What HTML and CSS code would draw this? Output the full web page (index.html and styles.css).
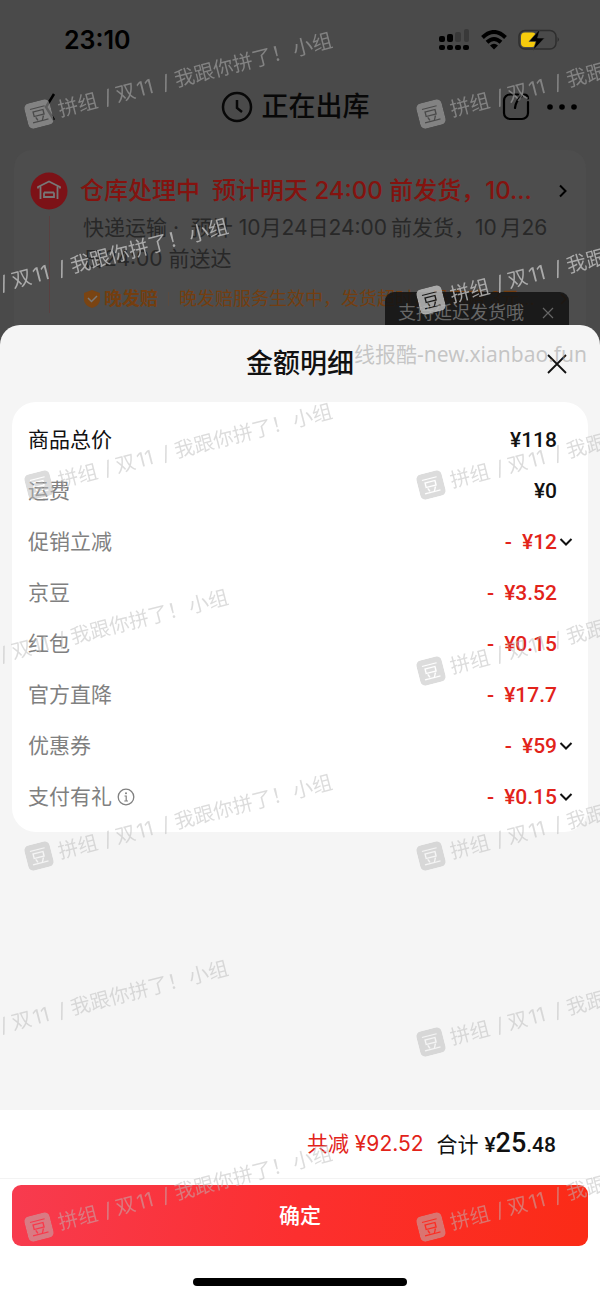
FILE: index.html
```html
<!DOCTYPE html>
<html lang="zh-CN">
<head>
<meta charset="utf-8">
<meta name="viewport" content="width=device-width, initial-scale=1">
<title>金额明细</title>
<link rel="stylesheet" href="styles.css">
</head>
<body>
<div class="screen">
  <div class="order">
    <div class="status-bar">
      <span class="clock">23:10</span>
      <div class="status-icons">
        <svg width="31" height="22" viewBox="0 0 31 22">
          <g fill="#000"><rect x="0" y="7" width="6" height="6" rx="2"/><rect x="8" y="5" width="6" height="8" rx="2"/><rect x="0" y="16" width="6" height="5" rx="2"/><rect x="8" y="16" width="6" height="5" rx="2"/><rect x="16" y="16" width="6" height="5" rx="2"/><rect x="24" y="16" width="6" height="5" rx="2"/></g>
          <g fill="#393939"><rect x="16" y="3" width="6" height="10" rx="2"/><rect x="25" y="0" width="5" height="13" rx="2"/></g>
        </svg>
        <svg width="26" height="20" viewBox="0 0 26 20">
          <g fill="none" stroke="#000" stroke-width="4"><path d="M1.5 7.5Q13-3.5 24.5 7.5"/><path d="M6 12.2Q13 5.800 20 12.200"/></g>
          <path d="M9 15.500Q13 12 17 15.500L13 19.500Z"/>
        </svg>
        <svg width="42" height="22" viewBox="0 0 42 22">
          <rect x="1" y="1.500" width="37" height="18.500" rx="6" fill="none" stroke="#2e2e2e" stroke-width="1.500"/>
          <path d="M39.500 8q3 2.500 0 5z" fill="#2e2e2e"/>
          <rect x="3" y="3.500" width="15" height="14.500" rx="4" fill="#f6cb0c"/>
          <path d="M22 0L11 12.500h7L15 21.500 26.500 9h-7z" stroke="#4a4a4a" stroke-width=".6"/>
        </svg>
      </div>
    </div>
    <div class="nav">
      <button class="icon-button back" aria-label="返回"><svg width="12" height="32" viewBox="0 0 12 32"><path d="M10 3L2 16L10 29" fill="none" stroke="#000" stroke-width="2.500"/></svg></button>
      <h1 class="nav-title">
        <svg width="32" height="32" viewBox="0 0 32 32"><g fill="none" stroke="#080808" stroke-width="2.500"><circle cx="16" cy="16" r="14"/><path d="M16 9v8l5 4"/></g></svg>
        正在出库
      </h1>
      <div class="nav-actions">
        <button class="icon-button" aria-label="分享"><svg width="28" height="28" viewBox="0 0 28 28"><g fill="none" stroke="#000" stroke-width="2.200" stroke-linecap="round"><path d="M16 1.500H8a6 6 0 0 0-6 6V20a6 6 0 0 0 6 6h12a6 6 0 0 0 6-6V9M22 1.500q4 0 4 4M20 3q-6 4-7 12"/></g></svg></button>
        <button class="icon-button" aria-label="更多"><svg width="32" height="8" viewBox="0 0 32 8"><circle cx="4" cy="4" r="2.800"/><circle cx="16" cy="4" r="2.800"/><circle cx="28" cy="4" r="2.800"/></svg></button>
      </div>
    </div>
    <section class="order-card">
      <div class="track">
        <svg width="38" height="38" viewBox="0 0 38 38"><circle cx="19" cy="19" r="18.500" fill="#7c1217"/><g fill="none" stroke="#777" stroke-width="1.800"><path d="M8 16.500V15L19 9.500 30 15v1.500M10.500 14v13M27.500 14v13M14 20.500h10M14 26V20.500M24 26V20.500M14 25h10"/></g></svg>
        <span class="track-line"></span>
      </div>
      <div class="order-body">
        <div class="order-head">
          <h2 class="order-status">仓库处理中&ensp;预计明天 24:00 前发货，10...</h2>
          <svg width="10" height="16" viewBox="0 0 10 16"><path d="M2 2.500L7.500 8 2 13.500" fill="none" stroke="#000" stroke-width="2"/></svg>
        </div>
        <p class="order-text">快递运输&nbsp;·&nbsp; 预计 10月24日24:00&thinsp;前发货，10&thinsp;月26<br>日24:00 前送达</p>
        <p class="promise">
          <svg width="18" height="20" viewBox="0 0 18 20"><path d="M9 1l8 3v7q0 5-8 8-8-3-8-8V4z" fill="#7a4412"/><path d="M5 9l3.500 3.500L14 7" fill="none" stroke="#777" stroke-width="1.500"/></svg>
          <b>晚发赔</b><i></i><span class="promise-text">晚发赔服务生效中，发货超时，最高赔 3元…</span><svg width="8" height="14" viewBox="0 0 8 14"><path d="M1 2l5 5-5 5" fill="none" stroke="#65360f" stroke-width="1.500"/></svg>
        </p>
      </div>
      <div class="toast">支持延迟发货哦
        <button class="icon-button" aria-label="关闭提示"><svg width="12" height="12" viewBox="0 0 12 12"><path d="M1 1l10 10M11 1L1 11" stroke="#666" stroke-width="1.200"/></svg></button>
      </div>
    </section>
  </div>

  <main class="sheet">
    <header class="sheet-head">
      <h2 class="sheet-title">金额明细</h2>
      <button class="icon-button sheet-close" aria-label="关闭"><svg width="20" height="20" viewBox="0 0 20 20"><path d="M1 1l18 18M19 1L1 19" stroke="#111" stroke-width="1.800"/></svg></button>
      <span class="site-mark">线报酷-new.xianbao.fun</span>
    </header>
    <dl class="bill">
      <div class="bill-row strong"><dt>商品总价</dt><dd>¥118</dd></div>
      <div class="bill-row"><dt>运费</dt><dd>¥0</dd></div>
      <div class="bill-row off"><dt>促销立减</dt><dd><span class="minus">-</span>¥12</dd><button class="icon-button more" aria-label="展开促销立减"><svg width="14" height="10" viewBox="0 0 14 10"><path d="M1.500 2L7 7.500 12.500 2" fill="none" stroke="#111" stroke-width="2"/></svg></button></div>
      <div class="bill-row off"><dt>京豆</dt><dd><span class="minus">-</span>¥3.52</dd></div>
      <div class="bill-row off"><dt>红包</dt><dd><span class="minus">-</span>¥0.15</dd></div>
      <div class="bill-row off"><dt>官方直降</dt><dd><span class="minus">-</span>¥17.7</dd></div>
      <div class="bill-row off"><dt>优惠券</dt><dd><span class="minus">-</span>¥59</dd><button class="icon-button more" aria-label="展开优惠券"><svg width="14" height="10" viewBox="0 0 14 10"><path d="M1.500 2L7 7.500 12.500 2" fill="none" stroke="#111" stroke-width="2"/></svg></button></div>
      <div class="bill-row off"><dt>支付有礼<svg width="18" height="18" viewBox="0 0 18 18"><circle cx="9" cy="9" r="7.800" fill="none" stroke="#808080" stroke-width="1.300"/><path d="M7.500 8H9.200v5M7.300 13h3.700" fill="none" stroke="#808080" stroke-width="1.200"/><circle cx="9" cy="5.300" r="1" fill="#808080"/></svg></dt><dd><span class="minus">-</span>¥0.15</dd><button class="icon-button more" aria-label="展开支付有礼"><svg width="14" height="10" viewBox="0 0 14 10"><path d="M1.500 2L7 7.500 12.500 2" fill="none" stroke="#111" stroke-width="2"/></svg></button></div>
    </dl>
  </main>

  <footer class="footer">
    <div class="total">
      <span class="saved">共减 <span>¥92.52</span></span>
      <span class="sum">合计 <b>¥<span class="sum-big">25</span>.48</b></span>
    </div>
    <div class="confirm-bar"><button class="confirm">确定</button></div>
    <div class="home-bar"></div>
  </footer>

  <svg class="marks" aria-hidden="true">
    <defs>
      <mask id="bean"><rect x="-13" y="-13" width="26" height="26" rx="5" fill="#fff"/><text class="bean" x="0" y="7" text-anchor="middle">豆</text></mask>
      <g id="mark" class="mark">
        <rect x="-13" y="-13" width="26" height="26" rx="5" mask="url(#bean)"/>
        <text x="20" y="8">拼组</text><text x="67" y="8">/</text><text x="79" y="8">双</text><text x="101" y="8">11</text><text x="127" y="8">/</text><text x="140" y="8">我跟你拼了！</text><text x="262" y="8">小组</text>
      </g>
    </defs>
    <use href="#mark" transform="translate(39 114) rotate(-14.400)"/>
    <use href="#mark" transform="translate(431 114) rotate(-14.400)"/>
    <use class="bright" href="#mark" transform="translate(-65 300) rotate(-14.400)"/>
    <use class="bright" href="#mark" transform="translate(431 300) rotate(-14.400)"/>
    <use href="#mark" transform="translate(39 485) rotate(-14.400)"/>
    <use href="#mark" transform="translate(431 485) rotate(-14.400)"/>
    <use href="#mark" transform="translate(-65 671) rotate(-14.400)"/>
    <use href="#mark" transform="translate(431 671) rotate(-14.400)"/>
    <use href="#mark" transform="translate(39 856) rotate(-14.400)"/>
    <use href="#mark" transform="translate(431 856) rotate(-14.400)"/>
    <use href="#mark" transform="translate(-65 1042) rotate(-14.400)"/>
    <use href="#mark" transform="translate(431 1042) rotate(-14.400)"/>
    <use href="#mark" transform="translate(39 1227) rotate(-14.400)"/>
    <use href="#mark" transform="translate(431 1227) rotate(-14.400)"/>
  </svg>
</div>
</body>
</html>
```
FILE: styles.css
```css
* { box-sizing: border-box; }
body { margin: 0; font-family: Inter, "Noto Sans CJK SC", sans-serif; color: #111; }
h1, h2, p, dl, dd { margin: 0; }
svg { display: block; flex: none; }
.icon-button { display: flex; align-items: center; justify-content: center; padding: 0; border: 0; background: none; flex: none; }

.screen { position: relative; display: flex; flex-direction: column; min-height: 100vh; overflow: hidden; background: #4a4a4a; }

/* dimmed order page behind the sheet */
.order { display: flex; flex-direction: column; }
.status-bar { display: flex; align-items: center; justify-content: space-between; height: 80px; padding: 0 40px 0 64px; }
.clock { font-size: 25px; font-weight: 600; color: #000; }
.status-icons { display: flex; align-items: center; gap: 11px; }
.nav { display: grid; grid-template-columns: 1fr auto 1fr; align-items: center; height: 54px; padding: 0 22px 0 12px; }
.nav-title { display: flex; align-items: center; gap: 9px; font-size: 27px; line-height: 36px; font-weight: 500; color: #080808; }
.back { justify-self: start; margin-left: 32px; }
.nav-actions { display: flex; align-items: center; gap: 16px; justify-self: end; }
.order-card { position: relative; display: flex; gap: 12px; margin: 16px 14px 0; padding: 22px 18px 30px 16px; border-radius: 18px; background: #4d4d4d; }
.track { display: flex; flex-direction: column; align-items: center; gap: 6px; }
.track-line { flex: 1; width: 1px; background: #633; opacity: .5; }
.order-body { flex: 1; min-width: 0; }
.order-head { display: flex; align-items: center; justify-content: space-between; height: 38px; }
.order-status { font-size: 24px; line-height: 36px; font-weight: 500; color: #84130f; white-space: nowrap; }
.order-text { padding: 2px 0 0 3px; font-size: 21px; line-height: 31px; color: #282828; }
.promise { display: flex; align-items: center; gap: 3px; padding: 11px 0 0 3px; font-size: 18px; line-height: 28px; color: #743e10; }
.promise b { font-weight: 600; }
.promise i { width: 1px; height: 14px; margin: 0 7px; background: #5a4b40; }
.promise-text { flex: 1; white-space: nowrap; }
.toast { position: absolute; right: 17px; top: 142px; display: flex; align-items: center; gap: 18px; height: 60px; padding: 0 15px 18px 13px; border-radius: 9px; background: rgba(18, 18, 18, .85); font-size: 18px; line-height: 28px; color: #666; }

/* bottom sheet */
.sheet { position: relative; flex: 1; margin-top: -18px; padding: 0 12px 278px; border-radius: 20px 20px 0 0; background: #f5f5f5; }
.sheet-head { position: relative; display: grid; grid-template-columns: 1fr auto 1fr; align-items: center; height: 77px; padding: 0 21px; }
.sheet-title { grid-column: 2; font-size: 27px; line-height: 36px; font-weight: 500; }
.sheet-close { justify-self: end; }
.site-mark { position: absolute; right: 1px; top: 14px; font-family: "Noto Sans", "Noto Sans CJK SC", sans-serif; font-size: 21px; line-height: 30px; color: rgba(150, 150, 150, .5); }
.bill { padding: 12px 16px 10px; border-radius: 24px; background: #fff; }
.bill-row { position: relative; display: flex; align-items: center; justify-content: space-between; height: 51px; padding-right: 15px; }
.bill-row dt { display: flex; align-items: center; gap: 5px; font-size: 21px; line-height: 30px; color: #808080; }
.bill-row.strong dt { color: #111; }
.bill-row dd { font-family: Roboto, sans-serif; font-size: 21px; font-weight: 500; line-height: 30px; }
.bill-row.off dd { color: #e2231a; }
.minus { margin-right: 10px; }
.more { position: absolute; right: -2px; top: 18px; width: 16px; height: 16px; }

/* totals and confirm */
.footer { background: #fff; }
.total { display: flex; align-items: center; justify-content: flex-end; gap: 13px; height: 68px; padding-right: 44px; font-size: 21px; line-height: 36px; }
.saved { color: #e2231a; }
.sum b { font-family: Roboto, sans-serif; font-weight: 500; }
.sum-big { font-size: 27px; }
.confirm-bar { padding: 6px 12px 0; border-top: 1px solid #f3f3f3; }
.confirm { display: block; width: 100%; height: 61px; padding: 0 0 4px; border: 0; border-radius: 9px; background: linear-gradient(100deg, #f73b4f, #fc2f2f 50%, #fb2b16); color: #fff; font-family: inherit; font-size: 21px; font-weight: 500; }
.home-bar { width: 214px; height: 8px; margin: 32px auto 12px; border-radius: 4px; background: #000; }

/* tiled group watermark */
.marks { position: absolute; inset: 0; width: 100%; height: 100%; pointer-events: none; }
.mark { fill: #bbb; font-size: 20px; }
.marks use { opacity: .5; }
.marks .bright { opacity: .85; }
.bean { fill: #000; font-size: 18px; }
```
